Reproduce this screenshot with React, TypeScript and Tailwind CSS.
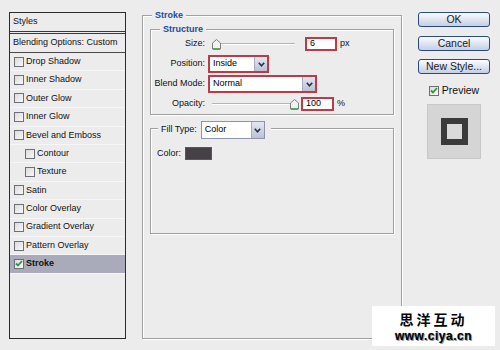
import React from "react";

const font = { fontFamily: '"Liberation Sans", Arial, sans-serif' };

type Row = { label: string; sub?: boolean; checked?: boolean };

const rows: Row[] = [
  { label: "Drop Shadow" },
  { label: "Inner Shadow" },
  { label: "Outer Glow" },
  { label: "Inner Glow" },
  { label: "Bevel and Emboss" },
  { label: "Contour", sub: true },
  { label: "Texture", sub: true },
  { label: "Satin" },
  { label: "Color Overlay" },
  { label: "Gradient Overlay" },
  { label: "Pattern Overlay" },
  { label: "Stroke", checked: true },
];

function Check({ checked }: { checked?: boolean }) {
  return (
    <span className="flex h-[10px] w-[10px] shrink-0 items-center justify-center border border-[#6b6f78] bg-gradient-to-br from-[#dcdcdc] to-[#f8f8f8]">
      {checked && (
        <svg width="8" height="7" viewBox="0 0 8 7">
          <path d="M1 3.5 L3 5.5 L7 1" fill="none" stroke="#2f9a32" strokeWidth="1.8" />
        </svg>
      )}
    </span>
  );
}

function Thumb() {
  return (
    <svg width="9" height="11" viewBox="0 0 9 11" className="absolute top-[-5px]">
      <path d="M4.5 0.5 L8.5 4 L8.5 10 L0.5 10 L0.5 4 Z" fill="#f1f1f1" stroke="#7d7d7d" />
      <path d="M1 10 L8 10" stroke="#3aa040" strokeWidth="1.5" />
    </svg>
  );
}

function Slider({ width, thumb }: { width: number; thumb: number }) {
  return (
    <div className="relative flex h-[18px] items-center" style={{ width }}>
      <div className="h-[2px] w-full border-b border-white bg-[#b6b6b0]" />
      <div className="absolute top-[9px]" style={{ left: thumb }}>
        <Thumb />
      </div>
    </div>
  );
}

function Field({ value, width }: { value: string; width: number }) {
  return (
    <div
      className="flex h-[14px] items-center border-2 border-[#b83d4a] bg-white pl-[3px] text-[9px] text-black"
      style={{ width }}
    >
      {value}
    </div>
  );
}

function Select({ value, width, red = true }: { value: string; width: number; red?: boolean }) {
  return (
    <div
      className={`flex h-[18px] items-stretch bg-white ${
        red ? "border-2 border-[#b83d4a]" : "border border-[#8d93a8]"
      }`}
      style={{ width }}
    >
      <span className="flex flex-1 items-center pl-[3px] text-[9px] text-black">{value}</span>
      <span className="flex w-[13px] items-center justify-center border-l border-[#a7adbf] bg-gradient-to-b from-[#e4e7f0] to-[#bcc2d4]">
        <svg width="7" height="5" viewBox="0 0 7 5">
          <path d="M0.8 0.8 L3.5 3.8 L6.2 0.8" fill="none" stroke="#27314a" strokeWidth="1.6" />
        </svg>
      </span>
    </div>
  );
}

function Button({ children }: { children: React.ReactNode }) {
  return (
    <button
      type="button"
      className="flex h-[15px] w-[72px] items-center justify-center rounded-[3px] border border-[#2b4a80] bg-gradient-to-b from-[#fbfcfe] to-[#c3cfe4] text-[10.5px] leading-none text-[#1a1a1a]"
    >
      {children}
    </button>
  );
}

export default function App() {
  return (
    <div className="relative flex h-[350px] w-[500px] items-start overflow-hidden bg-[#ececec] text-[#111]" style={font}>
      {/* styles list */}
      <div className="ml-[9px] mt-[12px] flex h-[327px] w-[117px] flex-col border border-[#2b2b2b] bg-[#ececec] text-[9px]">
        <div className="flex h-[21px] items-center border-b-[3px] border-double border-[#3a3a3a] px-[3px]">Styles</div>
        <div className="flex h-[19px] items-center border-b border-[#4a4a4a] px-[3px]">Blending Options: Custom</div>
        {rows.map((r) => (
          <div
            key={r.label}
            className={`flex h-[18.4px] items-center gap-[2px] border-b border-[#f6f6f6] ${r.sub ? "pl-[15px]" : "pl-[4px]"} ${
              r.checked ? "bg-[#a9abba] font-bold" : ""
            }`}
          >
            <Check checked={r.checked} />
            <span>{r.label}</span>
          </div>
        ))}
      </div>

      {/* stroke group */}
      <div className="relative ml-[16px] mt-[15px] flex h-[324px] w-[260px] flex-col border border-[#a0a0a0] px-[7px] pt-[13px] shadow-[inset_1px_1px_0_#fff,1px_1px_0_#fff]">
        <span className="absolute left-[9px] top-[-7px] bg-[#ececec] px-[3px] text-[9px] font-bold text-[#234a9a]">Stroke</span>

        <div className="relative h-[86px] border border-[#a0a0a0] pt-[5px] shadow-[inset_1px_1px_0_#fff,1px_1px_0_#fff]">
          <span className="absolute left-[9px] top-[-7px] bg-[#ececec] px-[3px] text-[9px] font-bold text-[#234a9a]">Structure</span>
          <div className="flex flex-col gap-[2px] text-[9px]">
            <div className="flex h-[18px] items-center">
              <span className="w-[54px] text-right">Size:</span>
              <div className="ml-[7px] flex items-center">
                <Slider width={83} thumb={0} />
                <div className="ml-[10px]">
                  <Field value="6" width={32} />
                </div>
                <span className="ml-[3px]">px</span>
              </div>
            </div>
            <div className="flex h-[18px] items-center">
              <span className="w-[54px] text-right">Position:</span>
              <div className="ml-[3px]">
                <Select value="Inside" width={61} />
              </div>
            </div>
            <div className="flex h-[18px] items-center">
              <span className="w-[54px] text-right">Blend Mode:</span>
              <div className="ml-[3px]">
                <Select value="Normal" width={109} />
              </div>
            </div>
            <div className="flex h-[18px] items-center">
              <span className="w-[54px] text-right">Opacity:</span>
              <div className="ml-[7px] flex items-center">
                <Slider width={84} thumb={78} />
                <div className="ml-[5px]">
                  <Field value="100" width={33} />
                </div>
                <span className="ml-[3px]">%</span>
              </div>
            </div>
          </div>
        </div>

        <div className="relative mt-[13px] h-[106px] border border-[#a0a0a0] pl-[6px] pt-[18px] shadow-[inset_1px_1px_0_#fff,1px_1px_0_#fff]">
          <div className="absolute left-[7px] top-[-8px] flex items-center gap-[4px] bg-[#ececec] pl-[3px] pr-[6px] text-[9px]">
            <span>Fill Type:</span>
            <Select value="Color" width={64} red={false} />
          </div>
          <div className="flex h-[13px] items-center gap-[4px] text-[9px]">
            <span>Color:</span>
            <span className="h-[13px] w-[27px] border border-[#a8343f] bg-[#464146]" />
          </div>
        </div>
      </div>

      {/* buttons */}
      <div className="ml-[16px] mt-[12px] flex w-[72px] flex-col items-center">
        <div className="flex flex-col gap-[8.5px]">
          <Button>OK</Button>
          <Button>Cancel</Button>
          <Button>New Style...</Button>
        </div>
        <div className="mt-[9px] flex items-center gap-[3px] text-[10.5px]">
          <Check checked />
          <span>Preview</span>
        </div>
        <div className="mt-[5px] flex h-[55px] w-[54px] items-center justify-center border border-[#c8c8c8] bg-[#d5d5d5]">
          <div className="h-[27px] w-[27px] border-[6px] border-[#3b3b3b] bg-[#dadada]" />
        </div>
      </div>

      {/* watermark */}
      <div className="absolute bottom-[4px] right-[5px] flex h-[40px] w-[123px] flex-col items-center justify-center bg-white">
        <span
          className="h-[16px] text-[14px] font-bold leading-[16px] tracking-[3px] text-black"
          style={{ fontFamily: '"Noto Sans CJK SC", sans-serif' }}
        >
          思洋互动
        </span>
        <span className="mt-[3px] h-[12px] text-[12px] font-bold leading-[12px] tracking-[0.5px] text-black [text-shadow:0_0_1px_#888,1px_1px_0_#999]">
          www.ciya.cn
        </span>
      </div>
    </div>
  );
}
